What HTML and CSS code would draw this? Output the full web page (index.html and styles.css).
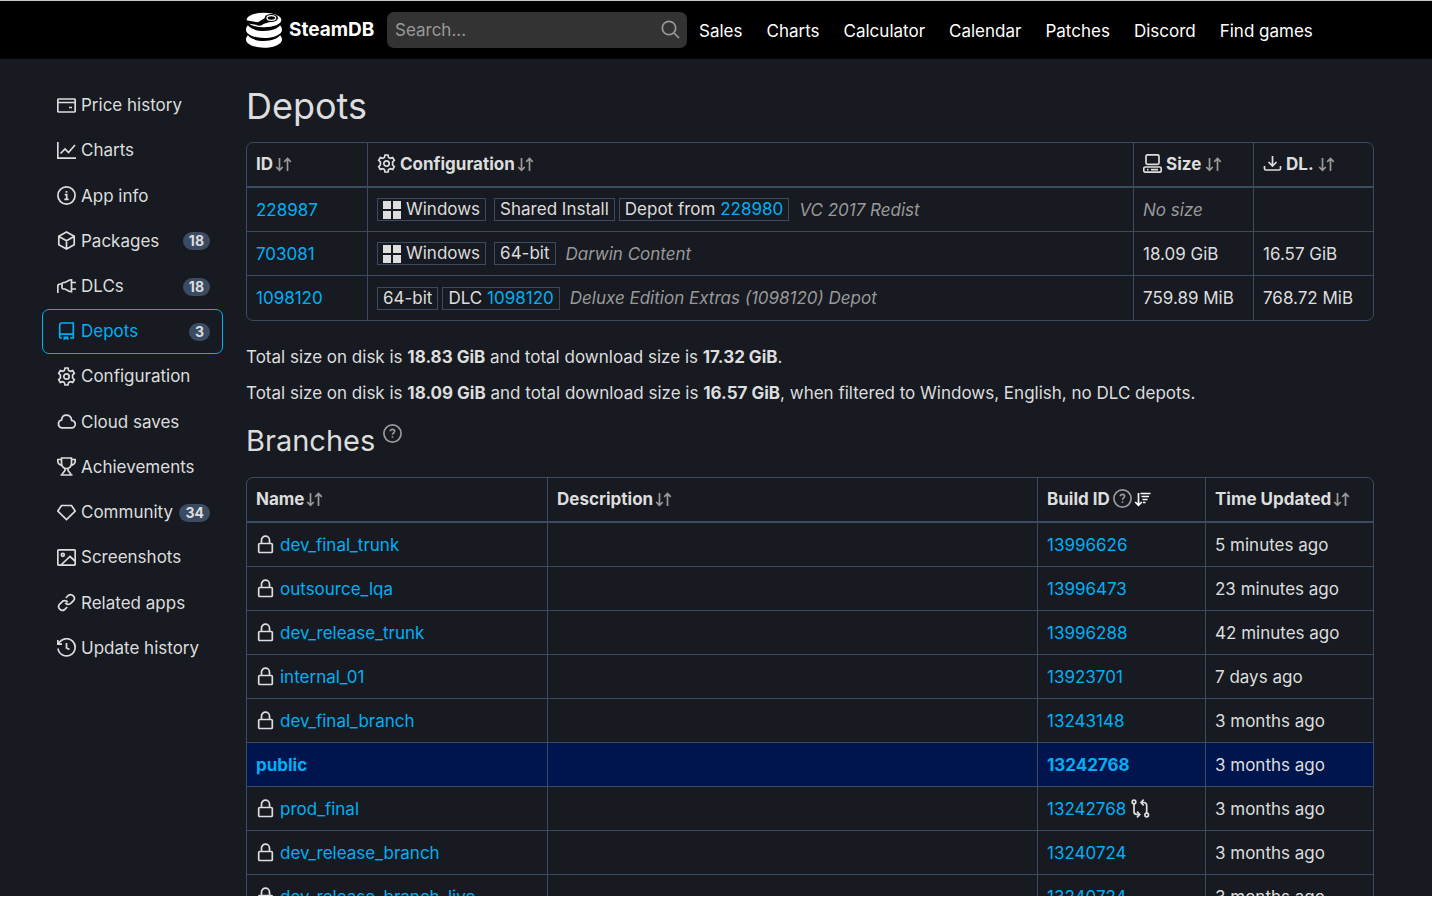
FILE: index.html
```html
<!DOCTYPE html>
<html lang="en">
<head>
<meta charset="utf-8">
<meta name="viewport" content="width=device-width, initial-scale=1">
<title>Depots · SteamDB</title>
<link rel="stylesheet" href="styles.css">
</head>
<body>
<svg class="sprite" aria-hidden="true">
  <symbol id="sort" viewBox="0 0 17 17"><path d="M4.500 2v12M1.200 11l3.300 3.300L7.800 11M12.500 15V2.500M9.200 5.800l3.300-3.300 3.300 3.300"/></symbol>
  <symbol id="sort-desc" viewBox="0 0 17 17"><path d="M4.500 2v12M1.200 11l3.300 3.300L7.800 11M6.500 2.500h10M7.500 5.500h7.500M8.500 8.500h5M9 11.500h2.500"/></symbol>
  <symbol id="gear" viewBox="0 0 19 19"><path d="M8 1h3l.6 2.400 1.700 1 2.400-.8 1.600 2.700-1.700 1.700v3l1.700 1.700-1.600 2.700-2.400-.8-1.700 1L11 18H8l-.6-2.400-1.700-1-2.400.8-1.600-2.700L3.400 11V8L1.700 6.300l1.600-2.700 2.400.8 1.700-1z"/><circle cx="9.500" cy="9.500" r="2.700"/></symbol>
  <symbol id="help" viewBox="0 0 19 19"><circle cx="9.500" cy="9.500" r="8.600"/><path d="M7.300 7.300c.2-2.600 4.300-2.500 4.300 0 0 1.500-2.100 1.600-2.100 3.400M9.500 12.300v1.500"/></symbol>
  <symbol id="lock" viewBox="0 0 19 19"><path d="M3.700 8.500h11.600q1 0 1 1v7q0 1-1 1H3.700q-1 0-1-1v-7q0-1 1-1zM5.500 8.500V5.200a4 4 0 0 1 8 0v3.300"/></symbol>
  <symbol id="windows" viewBox="0 0 18 18"><path d="M0 0h8v8H0zM10 0h8v8h-8zM0 10h8v8H0zM10 10h8v8h-8z"/></symbol>
</svg>
<div class="page">
  <header class="header">
    <a class="brand" href="#">
      <svg class="logo" viewBox="0 0 108 106" aria-hidden="true">
        <ellipse fill="#fff" cx="54" cy="23" rx="52" ry="22"/>
        <path d="M0 24l36 6 22-14 16 12-22 7c-3 6-15 7-22 2L0 33z"/>
        <ellipse cx="76" cy="17" rx="20" ry="12"/>
        <ellipse cx="76" cy="17" rx="13" ry="7" fill="none" stroke="#fff" stroke-width="4"/>
        <path fill="#fff" d="M6 39C-2 46-1 56 4 62c9 9 28 15 50 15s41-6 50-15c5-6 6-16-2-23-6 10-25 17-48 17S12 49 6 39zM6 69c-8 7-7 17-2 22 9 9 28 15 50 15s41-6 50-15c5-5 6-15-2-22-6 10-25 17-48 17S12 79 6 69z"/>
      </svg>
      <span>SteamDB</span>
    </a>
    <form class="search">
      <input type="search" aria-label="Search" placeholder="Search...">
      <svg class="icon" viewBox="0 0 19 19"><circle cx="8" cy="8" r="6.700"/><path d="M13 13l5 5"/></svg>
    </form>
    <nav class="nav">
      <a href="#">Sales</a><a href="#">Charts</a><a href="#">Calculator</a><a href="#">Calendar</a><a href="#">Patches</a><a href="#">Discord</a><a href="#">Find games</a>
    </nav>
  </header>
  <div class="layout">
    <nav class="side">
      <a href="#"><svg class="icon" viewBox="0 0 19 19"><rect x=".8" y="3" width="17.400" height="13" rx="1"/><path d="M1 6.500h17M12 11.500h3"/></svg>Price history</a>
      <a href="#"><svg class="icon" viewBox="0 0 19 19"><path d="M.8 1v16.200H19M3.500 12.500L8 8l3.500 3.500L18 4"/></svg>Charts</a>
      <a href="#"><svg class="icon" viewBox="0 0 19 19"><circle cx="9.500" cy="9.500" r="8.600"/><path d="M7.700 8.700h2v4.600M7.300 13.300h4.400M9.500 5v1.700"/></svg>App info</a>
      <a href="#"><svg class="icon" viewBox="0 0 19 19"><path d="M9.500 1l7.700 4.200v8.600L9.500 18l-7.700-4.200V5.200zM2 5.500l7.500 4.200L17 5.500M9.500 9.700V18"/></svg>Packages<span class="badge">18</span></a>
      <a href="#"><svg class="icon" viewBox="0 0 19 19"><path d="M.8 16V9.500q0-2.500 2.500-2.500H5M14.500 2v13.500M15 5.500h4M15 12h4M14.500 3h-2L8 5.500H6.500q-1.500 0-1.500 1.500v3.500Q5 12 6.500 12H8l4.500 2.500h2"/></svg>DLCs<span class="badge">18</span></a>
      <a class="active" href="#" aria-current="page"><svg class="icon" viewBox="0 0 19 19"><path d="M5 16H4q-1.300 0-1.300-1.300V3.200Q2.700 1 4.900 1h11.400v15H13M2.700 14q0-1.800 1.800-1.800h11.800"/><path class="solid" d="M6.500 14.500h5v4L9 16.800l-2.500 1.700z"/></svg>Depots<span class="badge">3</span></a>
      <a href="#"><svg class="icon"><use href="#gear"/></svg>Configuration</a>
      <a href="#"><svg class="icon" viewBox="0 0 19 19"><path d="M4.500 15.800h10a3.700 3.700 0 0 0 .2-7.400C14.200 5 12 3.200 9.300 3.200 6.800 3.200 4.800 5 4.600 8a4 4 0 0 0-.1 7.800z"/></svg>Cloud saves</a>
      <a href="#"><svg class="icon" viewBox="0 0 19 19"><path d="M4.500 1h10v5.500a5 5 0 0 1-10 0zM4.500 2.500H.8V4q0 3.500 4 4.300M14.500 2.500h3.700V4q0 3.500-4 4.300M8 11.500v2L5 17.200M11 11.500v2l3 3.700M3.500 18h12"/></svg>Achievements</a>
      <a href="#"><svg class="icon" viewBox="0 0 19 19"><path d="M4.500 2.500h10L18.200 8l-8.700 8.500L.8 8z"/></svg>Community<span class="badge">34</span></a>
      <a href="#"><svg class="icon" viewBox="0 0 19 19"><rect x=".8" y="1.800" width="17.400" height="15.400" rx="1"/><circle cx="5.800" cy="6.800" r="1.500"/><path d="M4 17l9-8.500 5 4.500"/></svg>Screenshots</a>
      <a href="#"><svg class="icon" viewBox="0 0 19 19"><path d="M8.800 5l2.500-2.500a3.700 3.700 0 0 1 5.200 5.200L14 10.200a3.700 3.700 0 0 1-5.700-.5M10.200 14l-2.500 2.500a3.700 3.700 0 0 1-5.200-5.200L5 8.800a3.700 3.700 0 0 1 5.700.5"/></svg>Related apps</a>
      <a href="#"><svg class="icon" viewBox="0 0 19 19"><path d="M1.800 5.500A8.600 8.600 0 1 1 1 10.500M.8 2v4.200H5M9.500 5v5l3 1.500"/></svg>Update history</a>
    </nav>
    <main class="main">
      <h1>Depots</h1>
      <table class="table">
        <colgroup><col class="w-id"><col><col class="w-size"><col class="w-size"></colgroup>
        <thead><tr>
          <th>ID<svg class="sort"><use href="#sort"/></svg></th>
          <th><svg class="icon lead"><use href="#gear"/></svg>Configuration<svg class="sort"><use href="#sort"/></svg></th>
          <th><svg class="icon lead" viewBox="0 0 19 19"><rect x="3" y=".8" width="13" height="9.500" rx="1.500"/><rect x=".8" y="13" width="17.400" height="5.200" rx="1.500"/><path d="M4 15.600h1.500M8 15.600h7"/></svg>Size<svg class="sort spaced"><use href="#sort"/></svg></th>
          <th><svg class="icon lead" viewBox="0 0 19 19"><path d="M1.500 12v2.500q0 1.500 1.500 1.500h13q1.500 0 1.500-1.500V12M9.500 2v9.500M5.500 8l4 4 4-4"/></svg>DL.<svg class="sort spaced"><use href="#sort"/></svg></th>
        </tr></thead>
        <tbody>
          <tr><td><a href="#">228987</a></td>
            <td><div class="config"><span class="tag os"><svg class="win"><use href="#windows"/></svg>Windows</span><span class="tag">Shared Install</span><span class="tag">Depot from <a href="#">228980</a></span><i class="note">VC 2017 Redist</i></div></td>
            <td><i class="muted">No size</i></td><td></td></tr>
          <tr><td><a href="#">703081</a></td>
            <td><div class="config"><span class="tag os"><svg class="win"><use href="#windows"/></svg>Windows</span><span class="tag">64-bit</span><i class="note">Darwin Content</i></div></td>
            <td>18.09 GiB</td><td>16.57 GiB</td></tr>
          <tr><td><a href="#">1098120</a></td>
            <td><div class="config"><span class="tag">64-bit</span><span class="tag">DLC <a href="#">1098120</a></span><i class="note">Deluxe Edition Extras (1098120) Depot</i></div></td>
            <td>759.89 MiB</td><td>768.72 MiB</td></tr>
        </tbody>
      </table>
      <p>Total size on disk is <b>18.83 GiB</b> and total download size is <b>17.32 GiB</b>.</p>
      <p>Total size on disk is <b>18.09 GiB</b> and total download size is <b>16.57 GiB</b>, when filtered to Windows, English, no DLC depots.</p>
      <h2>Branches <svg class="icon muted"><use href="#help"/></svg></h2>
      <table class="table">
        <colgroup><col class="w-name"><col><col class="w-build"><col class="w-build"></colgroup>
        <thead><tr>
          <th>Name<svg class="sort"><use href="#sort"/></svg></th>
          <th>Description<svg class="sort"><use href="#sort"/></svg></th>
          <th>Build ID<svg class="icon muted help"><use href="#help"/></svg><svg class="sort sorted"><use href="#sort-desc"/></svg></th>
          <th>Time Updated<svg class="sort"><use href="#sort"/></svg></th>
        </tr></thead>
        <tbody>
          <tr><td><svg class="icon lock"><use href="#lock"/></svg><a href="#">dev_final_trunk</a></td><td></td><td><a href="#">13996626</a></td><td>5 minutes ago</td></tr>
          <tr><td><svg class="icon lock"><use href="#lock"/></svg><a href="#">outsource_lqa</a></td><td></td><td><a href="#">13996473</a></td><td>23 minutes ago</td></tr>
          <tr><td><svg class="icon lock"><use href="#lock"/></svg><a href="#">dev_release_trunk</a></td><td></td><td><a href="#">13996288</a></td><td>42 minutes ago</td></tr>
          <tr><td><svg class="icon lock"><use href="#lock"/></svg><a href="#">internal_01</a></td><td></td><td><a href="#">13923701</a></td><td>7 days ago</td></tr>
          <tr><td><svg class="icon lock"><use href="#lock"/></svg><a href="#">dev_final_branch</a></td><td></td><td><a href="#">13243148</a></td><td>3 months ago</td></tr>
          <tr class="public"><td><a href="#">public</a></td><td></td><td><a href="#">13242768</a></td><td>3 months ago</td></tr>
          <tr><td><svg class="icon lock"><use href="#lock"/></svg><a href="#">prod_final</a></td><td></td><td><a href="#">13242768</a><svg class="icon compare" viewBox="0 0 19 19"><circle cx="3" cy="3" r="1.800"/><circle cx="15.700" cy="16" r="1.800"/><path d="M3 5v7.500q0 3 3 3h2M6 12.700l2.700 2.800L6 18.300M15.700 14V6.500q0-3-3-3h-2M12.700.7L10 3.500l2.700 2.800"/></svg></td><td>3 months ago</td></tr>
          <tr><td><svg class="icon lock"><use href="#lock"/></svg><a href="#">dev_release_branch</a></td><td></td><td><a href="#">13240724</a></td><td>3 months ago</td></tr>
          <tr><td><svg class="icon lock"><use href="#lock"/></svg><a href="#">dev_release_branch_live</a></td><td></td><td><a href="#">13240724</a></td><td>3 months ago</td></tr>
        </tbody>
      </table>
    </main>
  </div>
</div>
</body>
</html>
```

FILE: styles.css
```css
:root {
  --bg: #171a21;
  --text: #ddd;
  --muted: #999;
  --link: #00aff4;
  --line: #3a4b63;
}

* { box-sizing: border-box; }

body {
  margin: 0;
  background: #fff;
  color: var(--text);
  font: 17px/24px Inter, "Liberation Sans", sans-serif;
}

a { color: var(--link); text-decoration: none; }

.sprite { position: absolute; width: 0; height: 0; }

.page {
  height: calc(100vh - 8px);
  overflow: hidden;
  background: var(--bg);
  border-top: 1px solid #c8c8c8;
}

.icon, .sort {
  width: 19px;
  height: 19px;
  flex: none;
  fill: none;
  stroke: currentColor;
  stroke-width: 1.7;
  vertical-align: -3px;
}

.solid { fill: currentColor; stroke: none; }

.muted { color: var(--muted); }

.header {
  display: flex;
  align-items: center;
  height: 58px;
  padding-left: 246px;
  background: #000;
}

.brand {
  display: flex;
  align-items: center;
  gap: 7px;
  width: 141px;
  color: #fff;
  font-size: 19px;
  font-weight: 700;
}

.logo { width: 36px; height: 36px; }

.search { position: relative; width: 300px; }

.search input {
  display: block;
  width: 100%;
  height: 36px;
  padding: 0 36px 0 8px;
  border: 0;
  border-radius: 7px;
  background: #333;
  color: #fff;
  font: inherit;
}

.search input::placeholder { color: #999; opacity: 1; }

.search .icon {
  position: absolute;
  top: 8px;
  right: 7px;
  color: #999;
}

.nav { display: flex; }

.nav a { padding: 1px 12px 0; color: #fff; }

.layout {
  display: grid;
  grid-template-columns: 181px minmax(0, 1fr);
  column-gap: 23px;
  align-items: start;
  padding: 24px 58px 0 42px;
}

.side {
  display: grid;
  grid-auto-rows: 1fr;
  min-height: 588px;
}

.side a {
  display: flex;
  align-items: center;
  gap: 5px;
  padding: 0 12px 1px 14px;
  border: 1px solid transparent;
  border-radius: 7px;
  color: var(--text);
}

.side .active { border-color: var(--link); color: var(--link); }

.badge {
  margin: 1px 0 0 auto;
  padding: 0 6px;
  border-radius: 9px;
  background: var(--line);
  color: var(--text);
  font-size: 14px;
  font-weight: 700;
  line-height: 18px;
}

h1 {
  margin: 0 0 13px;
  font-size: 36px;
  font-weight: 400;
  line-height: 46px;
}

h2 {
  margin: 16px 0;
  font-size: 29px;
  font-weight: 400;
  line-height: 40px;
}

h2 .icon { vertical-align: 8px; }

p { margin: 0 0 12px; }

.table {
  width: 100%;
  table-layout: fixed;
  border: 1px solid var(--line);
  border-radius: 7px;
  border-spacing: 0;
}

.table + p { margin-top: 24px; }

.w-id { width: 120px; }
.w-size { width: 120px; }
.w-name { width: 300px; }
.w-build { width: 168px; }

.table th, .table td {
  height: 44px;
  padding: 0 9px;
  border-bottom: 1px solid var(--line);
  text-align: left;
  white-space: nowrap;
}

.table th {
  height: 45px;
  padding-bottom: 1px;
  border-bottom-width: 2px;
  font-weight: 700;
}

.table th + th, .table td + td { border-left: 1px solid var(--line); }

.table tbody tr:last-child td { border-bottom: 0; }

.sort { width: 17px; height: 17px; margin-left: 2px; color: var(--muted); }

.sorted { color: #fff; }

.lead { margin-right: 4px; }

.spaced { margin-left: 4px; }

.help { margin-left: 3px; }

.lock { margin-right: 5px; }

.compare { margin-left: 5px; }

.config { display: flex; align-items: center; gap: 4px; }

.tag {
  display: flex;
  align-items: center;
  padding: 0 5px;
  border: 1px solid var(--line);
  line-height: 21px;
  white-space: pre;
}

.os { margin-right: 4px; }

.win { width: 18px; height: 18px; margin-right: 5px; fill: currentColor; }

.note { margin-left: 6px; color: var(--muted); }

.public { background: #00144d; }

.public a { font-weight: 700; }
```
